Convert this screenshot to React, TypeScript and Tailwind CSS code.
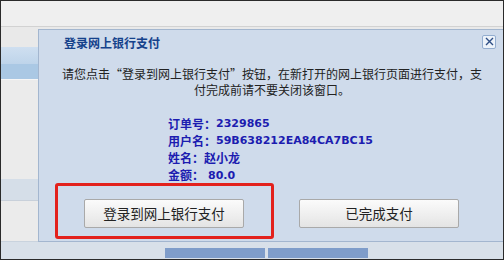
const cjk = "font-['Noto_Sans_CJK_SC','Noto_Sans',sans-serif]";
const latin = "font-['DejaVu_Sans'] text-[11px] leading-none";

export default function App() {
  return (
    <div className={`relative h-[260px] w-[504px] overflow-hidden border border-[#2a2a2a] bg-[#ececec] ${cjk}`}>
      {/* page underneath the dialog */}
      <div className="flex h-full flex-col">
        <div className="h-[26px] border-b border-[#d2d2d2] bg-[#efefef]" />
        <div className="h-[20px] bg-[#e9e9e9]" />
        <div className="h-[17px] bg-gradient-to-b from-[#cfdff0] to-[#bed4ea]" />
        <div className="h-[15px] bg-[#aac8e4]" />
        <div className="h-[100px] border-t border-[#f6f6f6] bg-[#ebebeb]" />
        <div className="h-[22px] border-b border-[#c8d0da] bg-[#d5dee8]" />
        <div className="h-[40px] bg-[#ebebeb]" />
        <div className="flex flex-1 border-t border-[#c9d3de] bg-[#d8e0e9] pl-[164px] pt-[6px]">
          <div className="h-[10px] w-[100px] bg-[#7f9dca]" />
          <div className="ml-[3px] h-[10px] w-[100px] bg-[#7f9dca]" />
        </div>
      </div>

      {/* dialog */}
      <div className="absolute left-[37px] top-[28px] flex h-[213px] w-[470px] flex-col border border-[#a3b6cf] bg-[#cfdbeb]">
        <div className="flex h-[25px] items-center pl-[25px] pr-[10px]">
          <span className="text-[12px] font-bold text-[#15428b]">登录网上银行支付</span>
          <div className="mb-[2px] ml-auto mr-[1px] flex h-[14px] w-[14px] items-center justify-center rounded-[2px] border border-[#94aed0] bg-[#edf3fa]">
            <svg width="9" height="9" viewBox="0 0 9 9">
              <path d="M1 1L8 8M8 1L1 8" stroke="#2f4f86" strokeWidth="1.4" />
            </svg>
          </div>
        </div>
        <div className="ml-[20px] mt-[11px] w-[426px] text-center text-[12px] leading-[16px] text-[#222]">
          请您点击“登录到网上银行支付”按钮，在新打开的网上银行页面进行支付，支付完成前请不要关闭该窗口。
        </div>
        <div className="ml-[129px] mt-[17px] flex flex-col text-[12px] font-bold text-[#1c1cb0]">
          <div className="flex h-[17px] items-center">订单号：<span className={latin}>2329865</span></div>
          <div className="flex h-[17px] items-center">用户名：<span className={latin}>59B638212EA84CA7BC15</span></div>
          <div className="flex h-[17.5px] items-center">姓名：赵小龙</div>
          <div className="flex h-[17.5px] items-center">金额：<span className={`${latin} ml-[4px]`}>80.0</span></div>
        </div>
        <div className="ml-[45px] mt-[15px] flex gap-[55px]">
          <button className="h-[29px] w-[160px] rounded-[2px] border border-[#a9a9a9] bg-gradient-to-b from-[#fbfbfb] to-[#e4e4e4] text-[13.5px] text-[#222]">
            登录到网上银行支付
          </button>
          <button className="h-[29px] w-[160px] rounded-[2px] border border-[#a9a9a9] bg-gradient-to-b from-[#fbfbfb] to-[#e4e4e4] text-[13.5px] text-[#222]">
            已完成支付
          </button>
        </div>
      </div>

      {/* red annotation */}
      <div className="absolute left-[54px] top-[182px] h-[56px] w-[219px] rounded-[3px] border-[3px] border-[#e3211c]" />
    </div>
  );
}
